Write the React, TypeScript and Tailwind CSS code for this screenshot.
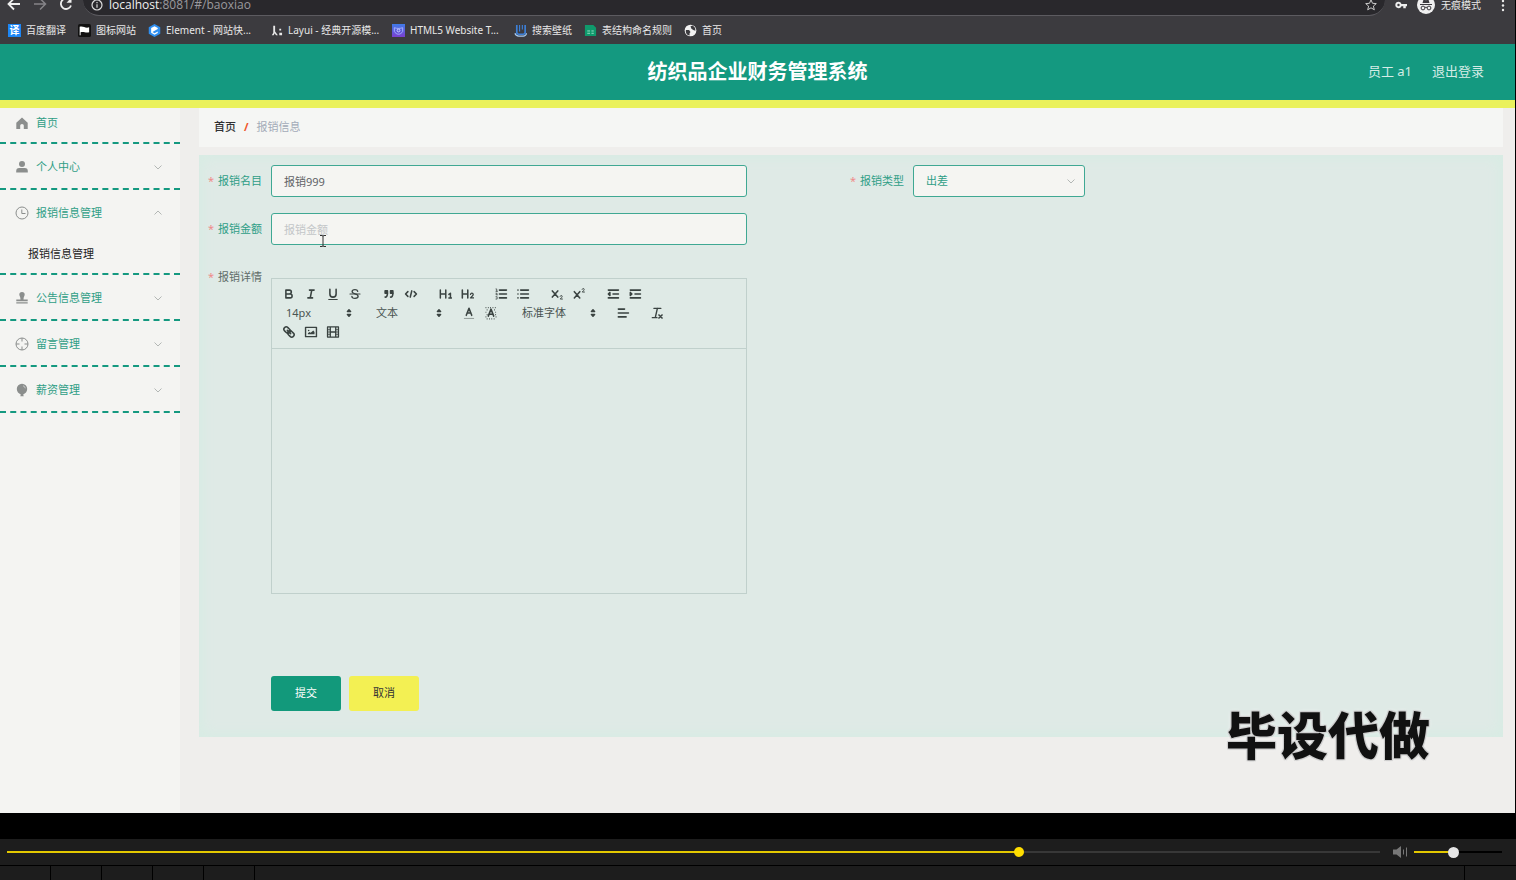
import { useState } from "react";
import type { CSSProperties, ReactNode } from "react";

const bookmarks = [
  { label: "百度翻译", icon: "translate", width: "" },
  { label: "图标网站", icon: "flag", width: "" },
  { label: "Element - 网站快...", icon: "element", width: "w-[92px]" },
  { label: "Layui - 经典开源模...", icon: "layui", width: "w-[92px]" },
  { label: "HTML5 Website T...", icon: "html5", width: "w-[92px]" },
  { label: "搜索壁纸", icon: "wallpaper", width: "" },
  { label: "表结构命名规则", icon: "sheet", width: "" },
  { label: "首页", icon: "globe", width: "" },
];

const menuItems = [
  { label: "个人中心", icon: "user", children: [] },
  { label: "报销信息管理", icon: "clock", children: ["报销信息管理"] },
  { label: "公告信息管理", icon: "stamp", children: [] },
  { label: "留言管理", icon: "aim", children: [] },
  { label: "薪资管理", icon: "balloon", children: [] },
];

function BookmarkIcon({ name }: { name: string }) {
  if (name === "translate") {
    return (
      <span className="flex size-[13px] shrink-0 items-center justify-center bg-[#1d86f5] text-[10px] leading-none font-bold text-white">
        译
      </span>
    );
  }
  return (
    <svg viewBox="0 0 14 14" className="size-[13px] shrink-0">
      {name === "flag" && (
        <>
          <rect width="14" height="14" rx="2" fill="#111" />
          <path d="M1.800 3v9h1V9c3-1.500 5 1 9.200 0V3.500c-4 1.500-6-1.500-10.200-.5z" fill="#fff" />
        </>
      )}
      {name === "element" && (
        <>
          <path d="M7 0l6.200 3.500v7L7 14 .8 10.500v-7z" fill="#2f8ff0" />
          <path d="M10.500 4.200L7 2.300 3.400 4.400v5L7 11.600l3.500-2V8L7 10 4.800 8.700l5.700-3.300z" fill="#fff" />
        </>
      )}
      {name === "layui" && <path d="M3.500 2h2v6L8.500 12h-2L5 10l-1 2H2l1.500-2.500zM10 5h2v2h-2zM10 9.500h3V12h-3z" fill="#e8e8e8" />}
      {name === "html5" && (
        <>
          <defs>
            <linearGradient id="html5" x2="0" y2="1">
              <stop stopColor="#3f7be8" />
              <stop offset="1" stopColor="#7a3fd0" />
            </linearGradient>
          </defs>
          <rect width="14" height="14" fill="url(#html5)" />
          <path d="M2.500 4c3 1 6 1 9 0v4c-1 2-3 3-4.500 3S3.500 10 2.500 8z" fill="none" stroke="#a9b6ff" />
          <circle cx="7" cy="7" r="1.500" fill="none" stroke="#d0d6ff" />
        </>
      )}
      {name === "wallpaper" && (
        <>
          <path d="M3 1v8q0 2 2 2h5q2 0 2-2V1" fill="none" stroke="#3d7fd6" strokeWidth="1.800" />
          <path d="M6 1v7M9 1v5" stroke="#3d7fd6" strokeWidth="1.200" />
          <path d="M1 10q1 3 4 3h5q3 0 3.500-3" fill="none" stroke="#a9cdf5" strokeWidth="1.200" />
        </>
      )}
      {name === "sheet" && (
        <>
          <path d="M1 1h9l3 3v9H1z" fill="#0f9a6c" />
          <path d="M3.500 7.500h3M8 7.500h2.500M3.500 10h3M8 10h2.500" stroke="#9fe0c8" />
        </>
      )}
      {name === "globe" && (
        <>
          <circle cx="7" cy="7" r="6.300" fill="#f2f2f2" />
          <path d="M2 6.500h3.500l1.500 2-1 1.500v2.500C3 12 1.500 9.500 2 6.500zM7 2.500l2.500-.8 2.500 2.500.3 3-2.300-.7-2-1.500z" fill="#3c3b3f" />
        </>
      )}
    </svg>
  );
}

function MenuIcon({ name }: { name: string }) {
  return (
    <svg viewBox="0 0 14 14" className="size-[14px] shrink-0" fill="none" stroke="#8b8e8d">
      {name === "home" && (
        <path d="M7 1.500L1.300 6.800V13h3.900V9.500q0-1.500 1.800-1.500t1.800 1.500V13h3.900V6.800z" fill="#8b8e8d" stroke="none" />
      )}
      {name === "user" && (
        <g fill="#8b8e8d" stroke="none">
          <circle cx="7" cy="4" r="3" />
          <path d="M1.200 12.500V11q0-3 3-3h5.600q3 0 3 3v1.500z" />
        </g>
      )}
      {name === "clock" && (
        <>
          <circle cx="7" cy="7" r="6" />
          <path d="M6.800 3.500v4h3.700" />
        </>
      )}
      {name === "stamp" && (
        <path d="M4.300 3.600a2.700 2.700 0 015.400 0c0 1.500-1.200 2-1.200 5h4.200v1.700H1.300V8.600h4.200c0-3-1.200-3.500-1.200-5zM1.300 11.300h11.400v1.300H1.300z" fill="#8b8e8d" stroke="none" />
      )}
      {name === "aim" && (
        <>
          <circle cx="7" cy="7" r="6" />
          <path d="M7 1v3.500M7 9.500V13M1 7h3.500M9.500 7H13" />
        </>
      )}
      {name === "balloon" && (
        <>
          <path d="M7 .8a5.200 5.200 0 015.200 5.300c0 2.500-1.800 4.700-4 5.400l.5 1.800H5.300l.5-1.800c-2.200-.7-4-2.900-4-5.400A5.200 5.200 0 017 .8z" fill="#8b8e8d" stroke="none" />
          <path d="M8 2.800q2 .5 2.300 2.500" stroke="#d5d7d5" strokeWidth=".8" />
        </>
      )}
    </svg>
  );
}

function Chevron({ up = false }: { up?: boolean }) {
  return (
    <svg viewBox="0 0 8 8" className="size-2" fill="none" stroke="#b3b7b5">
      <path d={up ? "M.5 5.500L4 2l3.500 3.500" : "M.5 2.500L4 6l3.500-3.500"} />
    </svg>
  );
}

function BrowserBar() {
  return (
    <div className="h-11 overflow-hidden bg-[#3c3b3f] text-[#e8e8e8]">
      <div className="flex h-4 items-start">
        <div className="flex h-2 items-center gap-3 pl-[7px]">
          <button aria-label="后退">
            <svg viewBox="0 0 14 14" className="size-[14px]" fill="none" stroke="#eee" strokeWidth="1.800">
              <path d="M13 7H2M7 1.500L1.500 7 7 12.500" />
            </svg>
          </button>
          <button aria-label="前进">
            <svg viewBox="0 0 14 14" className="size-[14px]" fill="none" stroke="#858488" strokeWidth="1.500">
              <path d="M1 7h11M7 1.500L12.500 7 7 12.500" />
            </svg>
          </button>
          <button aria-label="刷新">
            <svg viewBox="0 0 14 14" className="size-[14px]" fill="none" stroke="#eee" strokeWidth="1.800">
              <path d="M11.500 4A5.200 5.200 0 1012 8.500" />
              <path d="M12.500 .8v5H7.500z" fill="#eee" stroke="none" />
            </svg>
          </button>
        </div>
        <div className="ml-2.5 h-4 flex-1 rounded-b-2xl border-b border-[#5c5b60] bg-[#29282c]">
          <div className="flex h-2.5 items-center px-2 font-['Open_Sans',sans-serif] text-xs leading-2.5">
            <svg viewBox="0 0 12 12" className="size-3" fill="none" stroke="#ddd" strokeWidth="1.200">
              <circle cx="6" cy="6" r="5" />
              <path d="M6 5.300v3.500M6 3v1.300" />
            </svg>
            <span className="ml-1.5 flex-1 text-[#9b9a9e]">
              <span className="text-[#f0f0f0]">localhost</span>:8081/#/baoxiao
            </span>
            <button aria-label="收藏">
              <svg viewBox="0 0 12 12" className="size-3" fill="none" stroke="#ccc">
                <path d="M6 .8l1.500 3.500 3.800.3-2.900 2.500.9 3.700L6 8.800l-3.300 2 .9-3.700L.7 4.600l3.800-.3z" />
              </svg>
            </button>
          </div>
        </div>
        <div className="flex h-2.5 items-center pr-2.5 text-[10px] leading-2.5">
          <svg viewBox="0 0 12 8" className="ml-2.5 h-2 w-3" fill="#eee">
            <path fillRule="evenodd" d="M3.500.8a3.200 3.200 0 013 2.100H12v2.300h-1.200v2H8.300v-2H6.500A3.200 3.200 0 113.500.8zm0 2a1.200 1.200 0 100 2.400 1.200 1.200 0 000-2.400z" />
          </svg>
          <svg viewBox="0 0 18 18" className="ml-2.5 size-[18px]">
            <circle cx="9" cy="9" r="9" fill="#f0f0f0" />
            <path d="M5.500 7L6.500 3.500 9 4.300l2.500-.8 1 3.500zM3 8h12v1H3z" fill="#3c3b3f" />
            <path d="M8 11.500q1-.8 2 0" fill="none" stroke="#3c3b3f" />
            <circle cx="6" cy="12" r="1.900" fill="none" stroke="#3c3b3f" />
            <circle cx="12" cy="12" r="1.900" fill="none" stroke="#3c3b3f" />
          </svg>
          <span className="ml-1.5">无痕模式</span>
          <button aria-label="更多" className="ml-5">
            <svg viewBox="0 0 4 14" className="h-3.5 w-1" fill="#eee">
              <circle cx="2" cy="3" r="1.200" />
              <circle cx="2" cy="7.500" r="1.200" />
              <circle cx="2" cy="12" r="1.200" />
            </svg>
          </button>
        </div>
      </div>
      <nav className="flex h-7 items-center gap-3 pl-2 text-[10px]">
        {bookmarks.map((bookmark) => (
          <a key={bookmark.label} href="#" className="flex items-center gap-[5px] whitespace-nowrap">
            <BookmarkIcon name={bookmark.icon} />
            <span className={bookmark.width}>{bookmark.label}</span>
          </a>
        ))}
      </nav>
    </div>
  );
}

function Sidebar() {
  return (
    <aside className="w-[180px] shrink-0 bg-[#f4f4f2] text-[11px] text-[#2f9e86]">
      <a href="#" className="flex h-9 items-center gap-[7px] border-b-2 border-dashed border-[#149980] pb-1 pl-[15px]">
        <MenuIcon name="home" />
        首页
      </a>
      {menuItems.map((item) => (
        <div key={item.label} className="border-b-2 border-dashed border-[#149980]">
          <button className="flex h-11 w-full items-center gap-[7px] pt-0.5 pr-[18px] pl-[15px] text-left">
            <MenuIcon name={item.icon} />
            <span className="flex-1">{item.label}</span>
            <Chevron up={item.children.length > 0} />
          </button>
          {item.children.map((child) => (
            <a key={child} href="#" className="flex h-[39px] items-center pt-0.5 pl-7 text-[#222]">
              {child}
            </a>
          ))}
        </div>
      ))}
    </aside>
  );
}

function ToolButton({ label, children }: { label: string; children: ReactNode }) {
  return (
    <button type="button" aria-label={label} className="flex h-[19px] w-[22px] items-center justify-center">
      <svg viewBox="0 0 18 18" className="size-[14px]" fill="none" stroke="#3a4341" strokeWidth="2" strokeLinecap="round" strokeLinejoin="round">
        {children}
      </svg>
    </button>
  );
}

function ToolSelect({ label, value, width }: { label: string; value: string; width: string }) {
  return (
    <div className={`relative h-[19px] ${width}`}>
      <select aria-label={label} className="h-[19px] w-full appearance-none bg-transparent pl-2 text-[11px] leading-[19px] text-[#4a5452]">
        <option>{value}</option>
      </select>
      <svg viewBox="0 0 18 18" className="pointer-events-none absolute top-[3px] right-0 size-[14px]" fill="#3a4341" stroke="#3a4341" strokeWidth="2" strokeLinejoin="round">
        <path d="M7 11l2 2 2-2zM7 7l2-2 2 2z" />
      </svg>
    </div>
  );
}

function Editor() {
  return (
    <div className="h-[316px] w-full max-w-[476px] border border-[#c0d0cc]">
      <div className="border-b border-[#c0d0cc] px-1.5 pt-[5px] pb-[7px]">
        <div className="flex gap-3">
          <div className="flex">
            <ToolButton label="加粗">
              <path d="M5 4h4.500a2.500 2.500 0 010 5H5zM5 9h5.500a2.500 2.500 0 010 5H5z" />
            </ToolButton>
            <ToolButton label="斜体">
              <path d="M7 4h6M5 14h6M8 14l2-10" />
            </ToolButton>
            <ToolButton label="下划线">
              <path d="M5 3v6a4 4 0 008 0V3" />
              <path d="M3.500 16h11" strokeWidth="1.300" />
            </ToolButton>
            <ToolButton label="删除线">
              <path d="M2.500 9h13" strokeWidth="1.300" />
              <path d="M12.500 5.500C12 3.500 10 3.300 9 3.300c-2 0-3.700.8-3.700 2.500C5.300 9.500 13 8 13 12c0 2-2 2.700-4 2.700s-4-.7-4-2.700" strokeWidth="1.700" />
            </ToolButton>
          </div>
          <div className="flex">
            <ToolButton label="引用">
              <path d="M4 5h3v3H4zM11 5h3v3h-3z" fill="#3a4341" />
              <path d="M7 8c0 4-1 5-3 5M14 8c0 4-1 5-3 5" />
            </ToolButton>
            <ToolButton label="代码">
              <path d="M5 6L2 9l3 3M13 6l3 3-3 3M10 5L8 13" />
            </ToolButton>
          </div>
          <div className="flex">
            <ToolButton label="标题一">
              <path d="M3 4v10M10 4v10M3 9h7M14 9.500l2-1.500v6M14 14h3.500" strokeWidth="1.900" />
            </ToolButton>
            <ToolButton label="标题二">
              <path d="M3 4v10M10 4v10M3 9h7" />
              <path d="M13.500 9.500q.3-1.500 1.800-1.500t1.700 1.500q0 1-3.500 4.500h4" strokeWidth="1.600" />
            </ToolButton>
          </div>
          <div className="flex">
            <ToolButton label="有序列表">
              <path d="M7 4h9M7 9h9M7 14h9" />
              <path d="M2.500 2.500h1v3M2.500 5.500h2M2.500 8h1.500L2.500 10h2M2.500 12.500h1.500v3H2.500" strokeWidth="1" />
            </ToolButton>
            <ToolButton label="无序列表">
              <path d="M6 4h10M6 9h10M6 14h10M2.500 4h.1M2.500 9h.1M2.500 14h.1" />
            </ToolButton>
          </div>
          <div className="flex">
            <ToolButton label="下标">
              <path d="M3 5l7 8M10 5l-7 8" />
              <path d="M13 12q.3-1 1.500-1t1.200 1q0 1-2.500 3.500H16" strokeWidth="1.200" />
            </ToolButton>
            <ToolButton label="上标">
              <path d="M3 6l7 8M10 6l-7 8" />
              <path d="M13 3q.3-1 1.500-1t1.200 1q0 1-2.500 3.500H16" strokeWidth="1.200" />
            </ToolButton>
          </div>
          <div className="flex">
            <ToolButton label="减少缩进">
              <path d="M3 4h13M3 14h13M9 9h7" />
              <path d="M5 7v4L3 9z" fill="#3a4341" />
            </ToolButton>
            <ToolButton label="增加缩进">
              <path d="M3 4h13M3 14h13M9 9h7" />
              <path d="M3 7v4l2-2z" fill="#3a4341" />
            </ToolButton>
          </div>
        </div>
        <div className="flex gap-3">
          <ToolSelect label="字号" value="14px" width="w-[78px]" />
          <ToolSelect label="段落" value="文本" width="w-[78px]" />
          <div className="flex">
            <ToolButton label="文字颜色">
              <path d="M3 16h12" strokeWidth="1" stroke="#7d8784" />
              <path d="M5.500 12L9 3l3.500 9M6.500 9h5" />
            </ToolButton>
            <ToolButton label="背景颜色">
              <path d="M2 2h14M3.500 5h3M13 5h3M2 8h3M14.500 8h2M3.500 11h1M14.500 11h2M2 14h2M15 14h1M3.500 16.500h12" strokeWidth="1.500" strokeDasharray="1 2" strokeLinecap="butt" />
              <path d="M5.500 13L9 4l3.500 9M6.500 10.500h5" />
            </ToolButton>
          </div>
          <ToolSelect label="字体" value="标准字体" width="w-[86px]" />
          <ToolButton label="对齐">
            <path d="M3 4h8M3 9h13M3 14h10" />
          </ToolButton>
          <ToolButton label="清除格式">
            <path d="M5 3h9M9.500 3L7 14M3 15h6" strokeWidth="1.800" />
            <path d="M11.500 11.500l4 4M15.500 11.500l-4 4" />
          </ToolButton>
        </div>
        <div className="flex">
          <ToolButton label="链接">
            <g transform="rotate(45 9 9)">
              <rect x="1" y="6" width="9" height="6" rx="3" />
              <rect x="8" y="6" width="9" height="6" rx="3" />
              <path d="M6 9h6" />
            </g>
          </ToolButton>
          <ToolButton label="图片">
            <rect x="2" y="3" width="14" height="12" strokeWidth="1.800" />
            <circle cx="6" cy="7" r="1" fill="#3a4341" stroke="none" />
            <path d="M5 12v-1.500l2-1.500 1.500 1L12 7l1.500 2v3z" fill="#3a4341" stroke="none" />
          </ToolButton>
          <ToolButton label="视频">
            <path d="M2 2.500h14v13H2zM5.500 2.500v13M12.500 2.500v13M5.500 9h7" strokeWidth="1.700" />
            <path d="M2 6h3M2 9h3M2 12h3M13 6h3M13 9h3M13 12h3" strokeWidth="1" />
          </ToolButton>
        </div>
      </div>
      <div role="textbox" aria-label="报销详情" contentEditable className="h-60 outline-none" />
    </div>
  );
}

function FieldLabel({ htmlFor, children }: { htmlFor?: string; children: string }) {
  return (
    <label htmlFor={htmlFor} className="mr-[9px] flex h-8 w-[63px] shrink-0 items-center justify-end gap-1">
      <span className="text-[#f08a8a]">*</span>
      {children}
    </label>
  );
}

function ExpenseForm() {
  const [name, setName] = useState("报销999");
  const [amount, setAmount] = useState("");

  return (
    <form className="mt-2 h-[582px] bg-[#dfeae6] pt-2.5 pr-5 text-[11px] text-[#2f9e86] shadow-[inset_0_0_12px_4px_#d8ece4]">
      <div className="grid grid-cols-2">
        <div className="flex">
          <FieldLabel htmlFor="name">报销名目</FieldLabel>
          <input
            id="name"
            value={name}
            onChange={(e) => setName(e.target.value)}
            className="h-8 w-full max-w-[476px] rounded-[3px] border border-[#3fa893] bg-[#f5f5f2] px-3 text-[#606266]"
          />
        </div>
        <div className="flex">
          <FieldLabel htmlFor="type">报销类型</FieldLabel>
          <div className="relative w-[172px]">
            <select id="type" className="h-8 w-full appearance-none rounded-[3px] border border-[#3fa893] bg-[#f5f5f2] px-3">
              <option>出差</option>
            </select>
            <span className="pointer-events-none absolute top-3 right-2.5">
              <Chevron />
            </span>
          </div>
        </div>
      </div>
      <div className="relative mt-4 flex w-1/2">
        <FieldLabel htmlFor="amount">报销金额</FieldLabel>
        <input
          id="amount"
          value={amount}
          placeholder="报销金额"
          onChange={(e) => setAmount(e.target.value)}
          className="h-8 w-full max-w-[476px] rounded-[3px] border border-[#3fa893] bg-[#f5f5f2] px-3 placeholder:text-[#c3c6c8]"
        />
        {/* text cursor hovering over the amount field */}
        <svg viewBox="0 0 8 14" className="absolute top-[21px] left-[120px] h-3.5 w-2" fill="none" stroke="#333">
          <path d="M1 1.500h2l1 .5 1-.5h2M4 2v10M1 12.500h2l1-.5 1 .5h2" />
        </svg>
      </div>
      <div className="mt-4 flex w-1/2 text-[#606c69]">
        <FieldLabel>报销详情</FieldLabel>
        <div className="flex-1 pt-[17px]">
          <Editor />
        </div>
      </div>
      <div className="mt-[82px] ml-[72px] flex gap-2">
        <button type="button" className="h-[35px] w-[70px] rounded-[3px] bg-[#12997b] text-white">
          提交
        </button>
        <button type="button" className="h-[35px] w-[70px] rounded-[3px] bg-[#f3f053] text-[#333]">
          取消
        </button>
      </div>
    </form>
  );
}

function PlayerSlider({ label, initial, color, rest, className }: { label: string; initial: number; color: string; rest: string; className: string }) {
  const [value, setValue] = useState(initial);
  const track: CSSProperties = {
    background: `linear-gradient(to right, ${color} ${value}%, ${rest} ${value}%)`,
  };
  return (
    <input
      type="range"
      aria-label={label}
      min={0}
      max={100}
      step="any"
      value={value}
      onChange={(e) => setValue(Number(e.target.value))}
      style={track}
      className={`h-0.5 appearance-none ${className}`}
    />
  );
}

function Player() {
  return (
    <div className="bg-black pt-[26px]">
      <div className="flex h-[26px] items-center bg-[#1d1d1d] pr-3.5 pl-[7px]">
        <PlayerSlider
          label="播放进度"
          initial={73.9}
          color="#e3c800"
          rest="#383838"
          className="min-w-0 flex-1 [&::-webkit-slider-thumb]:size-2.5 [&::-webkit-slider-thumb]:appearance-none [&::-webkit-slider-thumb]:rounded-full [&::-webkit-slider-thumb]:bg-[#ffdd00]"
        />
        <button aria-label="静音" className="mr-1.5 ml-3">
          <svg viewBox="0 0 16 14" className="h-3.5 w-4" fill="#777" stroke="#777">
            <path d="M1 4.500h3.500L9 1v12L4.500 9.500H1z" stroke="none" />
            <path d="M11.500 4.500v5M14.500 2.500v9" />
          </svg>
        </button>
        <PlayerSlider
          label="音量"
          initial={44}
          color="#e3c800"
          rest="#000000"
          className="w-[88px] [&::-webkit-slider-thumb]:size-[11px] [&::-webkit-slider-thumb]:appearance-none [&::-webkit-slider-thumb]:rounded-full [&::-webkit-slider-thumb]:bg-[#e6e6e6]"
        />
      </div>
      <div className="mt-px flex h-3.5 bg-[#1d1d1d]">
        {[1, 2, 3, 4, 5].map((n) => (
          <div key={n} className="w-[51px] border-r border-black" />
        ))}
        <div className="flex-1 border-r border-black" />
        <div className="w-[51px]" />
      </div>
    </div>
  );
}

export default function App() {
  return (
    <div className="flex min-h-screen flex-col bg-black font-['Noto_Sans','Noto_Sans_CJK_SC',sans-serif]">
      <div className="relative mr-px flex flex-1 flex-col bg-[#efeeec]">
        <BrowserBar />
        <header className="grid h-16 grid-cols-3 items-center border-b-8 border-[#eaf15c] bg-[#149980] text-[13px] text-[#d5ece6]">
          <h1 className="col-start-2 text-center text-xl font-bold whitespace-nowrap text-white">纺织品企业财务管理系统</h1>
          <div className="flex justify-end gap-5 pr-[31px]">
            <span>员工 a1</span>
            <a href="#">退出登录</a>
          </div>
        </header>
        <div className="flex flex-1">
          <Sidebar />
          <main className="flex-1 pr-3 pl-[19px]">
            <nav className="flex h-[39px] items-center gap-2 bg-[#f5f6f4] pl-[15px] text-[11px]">
              <a href="#" className="font-medium text-[#303133]">
                首页
              </a>
              <span className="font-bold text-[#f0552b]">/</span>
              <span className="text-[#a3abb8]">报销信息</span>
            </nav>
            <ExpenseForm />
          </main>
        </div>
        <div className="absolute right-[85px] bottom-[52px] text-[51px] leading-[51px] font-black text-[#111] [text-shadow:1px_1px_1px_#ccc,-1px_-1px_1px_#ccc,1px_-1px_1px_#ccc,-1px_1px_1px_#ccc,0_0_4px_#fff]">
          毕设代做
        </div>
      </div>
      <Player />
    </div>
  );
}
